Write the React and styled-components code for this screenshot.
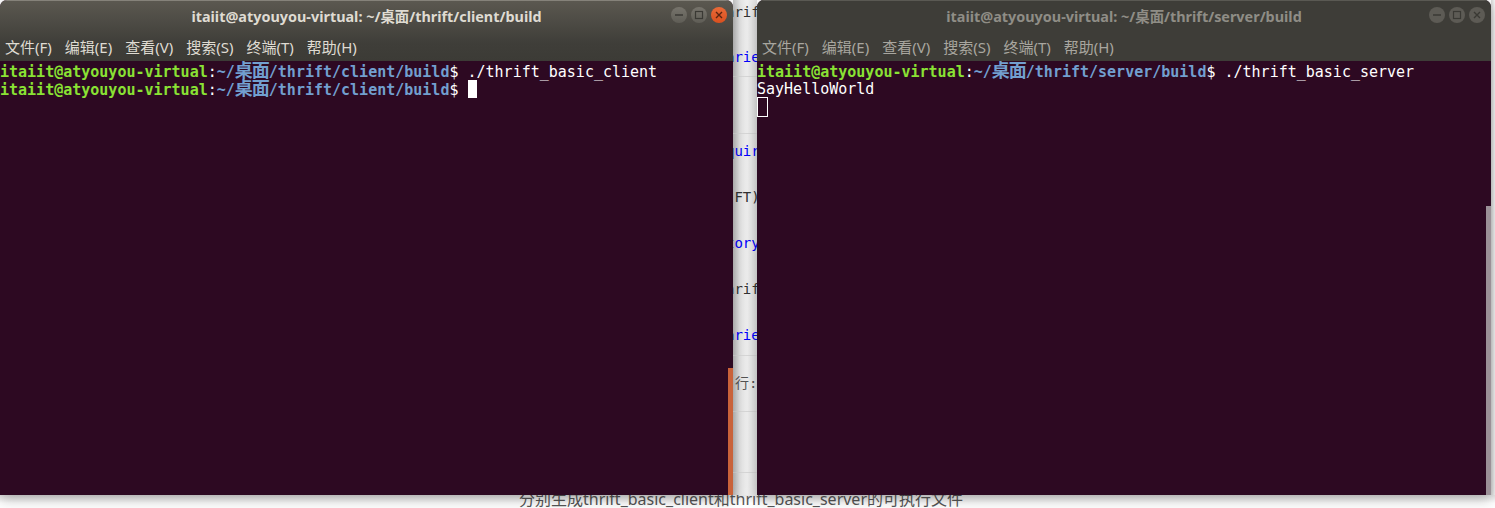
import React from "react";
import styled, { createGlobalStyle } from "styled-components";

const Global = createGlobalStyle`
  html, body { margin: 0; padding: 0; background: #fff; overflow: hidden; }
`;
const Page = styled.div`
  width: 1495px; height: 508px; overflow: hidden; display: flex; flex-direction: column;
  font-family: "Noto Sans", "Noto Sans CJK SC", sans-serif;
`;
const Desk = styled.div`
  display: flex; height: 495px; flex: none; position: relative;
`;
const Win = styled.section`
  flex: none; width: ${p => p.$w}px; height: 495px; position: relative; z-index: 2;
  display: flex; flex-direction: column; border-radius: 7px 7px 0 0; overflow: hidden;
  background: #2d0922; box-shadow: 0 4px 14px rgba(0,0,0,.28);
`;
const Chrome = styled.div`
  height: 61px; flex: none; display: flex; flex-direction: column; box-sizing: border-box;
  border-top: 1px solid ${p => p.$on ? "#85827a" : "#5a5953"};
  background: ${p => p.$on ? "linear-gradient(#5b5850, #3f3e39 42px, #3c3b36)" : "#3e3d38"};
`;
const Title = styled.header`
  height: 29px; flex: none; display: flex; align-items: center; justify-content: center; position: relative;
  color: ${p => p.$on ? "#dfdbd2" : "#8f8d86"};
  font: 700 14.4px "Noto Sans", "Noto Sans CJK SC", sans-serif;
  box-sizing: border-box;
`;
const Buttons = styled.div`
  position: absolute; right: 6px; top: 6px; display: flex; gap: 4px;
`;
const Round = styled.span`
  width: 16px; height: 16px; border-radius: 50%; display: flex;
  background: ${p => p.$close
    ? "linear-gradient(#e96a38, #d9501f)"
    : p.$on ? "linear-gradient(#77746c, #5f5d56)" : "#5d5b55"};
  align-items: center; justify-content: center;
  color: ${p => p.$close ? "#5a2410" : "#3a3934"};
`;
const Menu = styled.nav`
  height: 31px; flex: none; display: flex; gap: 13px; padding: 1px 0 0 5px; box-sizing: border-box; align-items: center;
  font: 15px "Noto Sans", "Noto Sans CJK SC", sans-serif;
  color: ${p => p.$on ? "#dfdbd2" : "#a8a69f"};
`;
const Term = styled.pre`
  margin: 0; flex: 1; position: relative; color: #fff;
  font: 15px/18px "DejaVu Sans Mono", "Noto Sans CJK SC", monospace;
  padding-top: 1px;
`;
const Line = styled.div` height: 18px; white-space: pre; `;
const User = styled.b` color: #8ae234; `;
const Path = styled.b` color: #729fcf; `;
const Wide = styled.span` font-size: 18px; letter-spacing: -1px; `;
const Block = styled.i`
  display: inline-block; vertical-align: top; box-sizing: border-box;
  width: ${p => p.$hollow ? 11 : 9}px;
  height: ${p => p.$hollow ? 20 : 18}px;
  margin-top: ${p => p.$hollow ? -1 : 0}px;
  background: ${p => p.$hollow ? "transparent" : "#fff"};
  border: 1px solid #fff;
`;
const Scroll = styled.div`
  position: absolute; right: 0; top: ${p => p.$top}px; bottom: 0; width: 5px; background: ${p => p.$c};
`;
const Strip = styled.div`
  flex: none; width: 24px; height: 495px; overflow: hidden; position: relative; z-index: 1;
  background: linear-gradient(90deg, #c4c4c4 0, #e4e4e4 7px, #f0f0f0 14px, #e2e2e2 24px);
  display: flex; flex-direction: column;
`;
const Row = styled.div`
  height: ${p => p.$h}px; flex: none; box-sizing: border-box; white-space: nowrap; overflow: hidden;
  font: 14px/18px "DejaVu Sans Mono", "Noto Sans CJK SC", monospace;
  color: ${p => p.$c || "#333"};
  padding-top: ${p => p.$pad || 0}px;
  text-indent: -7px;
  border-bottom: ${p => p.$rule ? "1px solid #d9d9d9" : "0"};
`;
const Note = styled(Row)`
  color: #555; text-indent: 2px;
`;
const Edge = styled.div`
  width: 4px; flex: none; height: 495px;
  background: linear-gradient(90deg, #d8d8d8, #f6f6f6);
`;
const Caption = styled.div`
  height: 13px; flex: none; overflow: hidden; display: flex; justify-content: center; align-items: flex-end;
  color: #555; font: 16px/17px "Noto Sans", "Noto Sans CJK SC", sans-serif; white-space: nowrap;
  padding-right: 13px;
  background: linear-gradient(#e6e6e6, #fff 8px);
`;

const Controls = ({ on }) => (
  <Buttons>
    <Round $on={on}><svg width="10" height="10" viewBox="0 0 10 10"><path d="M1 5h8" stroke="currentColor" strokeWidth="1.3" /></svg></Round>
    <Round $on={on}><svg width="10" height="10" viewBox="0 0 10 10"><rect x="1.5" y="1.5" width="7" height="7" fill="none" stroke="currentColor" strokeWidth="1.2" /></svg></Round>
    <Round $close={on} $on={on}><svg width="10" height="10" viewBox="0 0 10 10"><path d="M2 2l6 6M8 2l-6 6" stroke="currentColor" strokeWidth="1.4" /></svg></Round>
  </Buttons>
);

const menu = ["文件(F)", "编辑(E)", "查看(V)", "搜索(S)", "终端(T)", "帮助(H)"];

const Prompt = ({ dir }) => (
  <><User>itaiit@atyouyou-virtual</User>:<Path>~/<Wide>桌面</Wide>/thrift/{dir}/build</Path>$ </>
);

const Window = ({ w, on, dir, scrollTop, scrollColor, children }) => (
  <Win $w={w}>
    <Chrome $on={on}>
      <Title $on={on}>itaiit@atyouyou-virtual: ~/桌面/thrift/{dir}/build<Controls on={on} /></Title>
      <Menu $on={on}>{menu.map(m => <span key={m}>{m}</span>)}</Menu>
    </Chrome>
    <Term>{children}<Scroll $top={scrollTop} $c={scrollColor} /></Term>
  </Win>
);

export default function App() {
  return (
    <Page>
      <Global />
      <Desk>
        <Window w={733} on dir="client" scrollTop={307} scrollColor="#c9623a">
          <Line><Prompt dir="client" />./thrift_basic_client</Line>
          <Line><Prompt dir="client" /><Block /></Line>
        </Window>
        <Strip>
          <Row $h={24} $pad={3}>hrift</Row>
          <Row $h={53} $pad={24} $c="#00f" $rule>aries</Row>
          <Row $h={57} $rule />
          <Row $h={46} $pad={8} $c="#00f">quire</Row>
          <Row $h={46} $pad={8}>(FT)</Row>
          <Row $h={46} $pad={8} $c="#00f">tory</Row>
          <Row $h={46} $pad={8}>hrift</Row>
          <Row $h={38} $pad={8} $c="#00f" $rule>aries</Row>
          <Note $h={56} $pad={18} $rule>行:</Note>
          <Row $h={61} $rule />
        </Strip>
        <Window w={734} dir="server" scrollTop={145} scrollColor="#9b9097">
          <Line><Prompt dir="server" />./thrift_basic_server</Line>
          <Line>SayHelloWorld</Line>
          <Line><Block $hollow /></Line>
        </Window>
        <Edge />
      </Desk>
      <Caption>分别生成thrift_basic_client和thrift_basic_server的可执行文件</Caption>
    </Page>
  );
}
